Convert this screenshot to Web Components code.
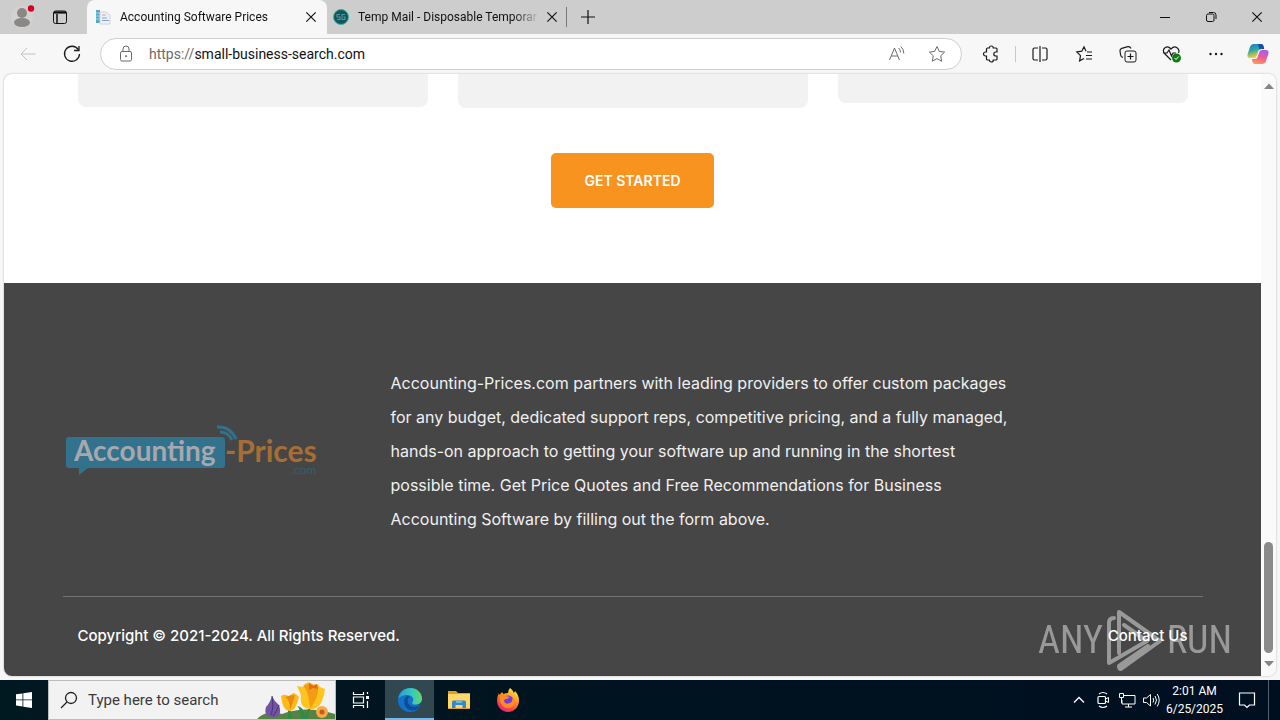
<!DOCTYPE html>
<html lang="en">
<head>
<meta charset="utf-8">
<title>Accounting Software Prices</title>
<style>
    html, body{
        height: 100%;
        margin: 0;
    }
    body{
        display: flex;
        flex-direction: column;
        overflow: hidden;
        background: #f7f7f7;
        font-family: Roboto, "Noto Sans", sans-serif;
        font-size: 12px;
        color: #1b1b1b;
    }
</style>
</head>
<body>
<browser-window>
    <tab-strip slot="tabs">
        <browser-tab icon="page" label="Accounting Software Prices" active></browser-tab>
        <browser-tab icon="mail" label="Temp Mail - Disposable Temporar"></browser-tab>
    </tab-strip>
    <tool-bar slot="toolbar" scheme="https://" address="small-business-search.com"></tool-bar>
    <card-row></card-row>
    <call-to-action>GET STARTED</call-to-action>
    <site-footer>
        <brand-logo slot="logo"></brand-logo>
        <span slot="about">Accounting-Prices.com partners with leading providers to offer custom packages<br>for any budget, dedicated support reps, competitive pricing, and a fully managed,<br>hands-on approach to getting your software up and running in the shortest<br>possible time. Get Price Quotes and Free Recommendations for Business<br>Accounting Software by filling out the form above.</span>
        <span slot="copyright">Copyright © 2021-2024. All Rights Reserved.</span>
    </site-footer>
</browser-window>
<task-bar></task-bar>
<any-run-mark></any-run-mark>

<script>
// small helper: build the template once, clone it for every instance
function define(tag, html, setup){
    const template = document.createElement("template");
    template.innerHTML = html;
    customElements.define(tag, class extends HTMLElement {
        constructor(){
            super();
            this.attachShadow({mode: "open"});
        }
        connectedCallback(){
            if (this.shadowRoot.childNodes.length) return;
            this.shadowRoot.appendChild(template.content.cloneNode(true));
            if (setup) setup(this, this.shadowRoot);
        }
    });
}

// ICONS - [viewBox, markup]
const icons = {
    profile: ["0 0 26 26", `<circle cx="12" cy="13" r="11" fill="#d4d2d1" stroke="none"/><circle cx="12" cy="9" r="5" fill="#8a8886" stroke="none"/><ellipse cx="12" cy="18.500" rx="8" ry="4.500" fill="#8a8886" stroke="none"/><circle cx="21" cy="4.500" r="3.200" fill="#d5001f" stroke="none"/>`],
    workspaces: ["0 0 16 16", `<rect x="1.500" y="2" width="13" height="12.500" rx="2"/><path d="M2 3.500h12" stroke-width="2.200"/><path d="M5 5v9" stroke-width="1.500"/>`],
    page: ["0 0 16 16", `<path d="M1 1h4v13H1z" fill="#55abc7" stroke="none"/><path d="M5 3h6l4 3v9H5z" fill="#edf1f7" stroke="#cdd4df"/><path d="M7 9h5M7 11.500h7" stroke="#8c9ec0"/><path d="M7 6h4" stroke="#e0a0a0"/><path d="M1 4h4M1 7h4M1 10h4" stroke="#a8d3e1"/>`],
    mail: ["0 0 16 16", `<circle cx="8" cy="8" r="7.500" fill="#155563" stroke="#32b39b"/><path d="M7 5.500H4v2.500h3v2.500H4M12 5.500H9v5h3V8h-1.500" stroke="#4f9a91" stroke-width="1.100"/>`],
    close: ["0 0 12 12", `<path d="M2 2l8 8M10 2l-8 8"/>`],
    plus: ["0 0 16 16", `<path d="M8 1v14M1 8h14" stroke-width="1.200"/>`],
    minimize: ["0 0 12 12", `<path d="M1 6.500h10"/>`],
    restore: ["0 0 12 12", `<rect x="1.500" y="3" width="7.500" height="7.500" rx="1.500"/><path d="M4 1.500h4.500q2.500 0 2.500 2.500v4"/>`],
    back: ["0 0 18 18", `<path d="M16.500 9H2M8 3L2 9l6 6"/>`],
    reload: ["0 0 18 18", `<path d="M15.200 4.500A7.500 7.500 0 1 0 16.500 9M16 1v4.500h-5" stroke-width="1.300"/>`],
    lock: ["0 0 16 18", `<rect x="2.500" y="6.500" width="11" height="9.500" rx="1.500"/><path d="M5 6.500V4a3 3 0 0 1 6 0v2.500"/><circle cx="8" cy="11.200" r=".6" fill="currentColor"/>`],
    read: ["0 0 18 18", `<path d="M1.500 15L6.500 3l5 12M3.200 11h6.600M10.500 3q2 1.500 2 4.500M12.800 1.500q3 2.500 3 7"/>`],
    star: ["0 0 18 18", `<path d="M9 1.500l2.300 4.900 5.300.7-3.900 3.700 1 5.400L9 13.600l-4.700 2.600 1-5.400L1.400 7.100l5.300-.7z"/>`],
    puzzle: ["0 0 18 18", `<path d="M5.500 3h1.800a2 2 0 0 1 4 0H14q1 0 1 1v3h-1.200a2 2 0 0 0 0 4H15v3q0 1-1 1h-2.700a2 2 0 0 1-4 0H5.500q-1 0-1-1v-3h-1a2 2 0 0 1 0-4h1V4q0-1 1-1z" stroke-width="1.200"/>`],
    split: ["0 0 18 18", `<path d="M7 3H3.500Q2 3 2 4.500v9Q2 15 3.500 15H7M11 3h3.500Q16 3 16 4.500v9q0 1.500-1.500 1.500H11M9 1v16" stroke-width="1.200"/>`],
    favorites: ["0 0 18 18", `<path d="M11 6.200L9 1.800 6.800 6.200l-5 .7 3.700 3.700-.9 5.200L9 13.500M12 7h5M11 10.500h6M11 14h6" stroke-width="1.200"/>`],
    collections: ["0 0 18 18", `<rect x="6" y="6" width="11" height="11" rx="2"/><path d="M11.500 8.500v6M8.500 11.500h6M4 12.500Q2 12 1.600 10L1 6Q.8 4 2.800 3.400l6-1.700Q11 1.200 12 3.500" stroke-width="1.200"/>`],
    essentials: ["0 0 20 18", `<path d="M9 15L2.500 8.500Q0 5 3 2.700 6 .8 9 4q3-3.200 6-1.300Q18 5 16.500 8M1 8h4l2-3 2.500 6 1.500-3h3" stroke-width="1.200"/><circle cx="14.500" cy="13" r="4.500" fill="#107c10" stroke="none"/><path d="M12.500 13l1.500 1.500 2.700-3" stroke="#fff"/>`],
    more: ["0 0 18 18", `<g fill="currentColor" stroke="none"><circle cx="3.500" cy="9" r="1.200"/><circle cx="9" cy="9" r="1.200"/><circle cx="14.500" cy="9" r="1.200"/></g>`],
    copilot: ["0 0 22 20", `<defs><linearGradient id="a" x2=".3" y2="1"><stop stop-color="#1776d2"/><stop offset=".5" stop-color="#33a89f"/><stop offset="1" stop-color="#ffd02e"/></linearGradient><linearGradient id="b" x1=".6" x2=".3" y2="1"><stop stop-color="#a85be8"/><stop offset=".5" stop-color="#ee5c9a"/><stop offset="1" stop-color="#ff9b50"/></linearGradient></defs><g stroke="none"><path d="M7 0h7q2 0 2.500 2l.7 3H14q-2 0-2.600 2L9.700 12Q9 14 7 14H3q-3 0-2.500-3.500L3 3Q4 0 7 0z" fill="url(#a)"/><path d="M15 20H8q-2 0-2.500-2l-.7-3H8q2 0 2.600-2l1.700-5Q13 6 15 6h4q3 0 2.500 3.500L19 17q-1 3-4 3z" fill="url(#b)"/><path d="M11 0h3q2 0 2.500 2l.7 3H14q-1 0-1.700.5z" fill="#164eaf"/></g>`],
    up: ["0 0 10 6", `<path d="M0 6L5 .5 10 6z" fill="#858585" stroke="none"/>`],
    down: ["0 0 10 6", `<path d="M0 0l5 5.500L10 0z" fill="#858585" stroke="none"/>`],
    windows: ["0 0 16 16", `<path d="M0 2.300l6.500-.9v6.100H0zM7.300 1.300L16 0v7.500H7.300zM0 8.300h6.500v6.200L0 13.600zM7.300 8.300H16V16l-8.700-1.300z" fill="#fff" stroke="none"/>`],
    search: ["0 0 18 18", `<circle cx="11" cy="7" r="5.500" stroke-width="1.300"/><path d="M7 11l-6 6" stroke-width="1.300"/>`],
    tasks: ["0 0 18 18", `<path d="M1.500 1v2.500h10V1M1.500 17v-2.500h10V17M1.500 6h10v6h-10zM15.500 1v2M15.500 10v7" stroke-width="1.200"/><path d="M14 5h3v3h-3z" fill="currentColor" stroke="none"/>`],
    edge: ["0 0 24 24", `<defs><linearGradient id="e" x1="0" x2="1"><stop stop-color="#229fda"/><stop offset=".6" stop-color="#39c9b7"/><stop offset="1" stop-color="#66d66b"/></linearGradient></defs><g stroke="none"><circle cx="12" cy="12" r="12" fill="#1272ca"/><path d="M.3 10.500C1.500 4 6.500 0 12.500 0 19 0 24 5 24 10.500c0 4-3 6-6.500 6-3 0-4-1.300-3-2.600 2.300-3-.5-7-5-7-4.500 0-8 2-9.200 3.600z" fill="url(#e)"/><path d="M9.500 8C4 10.500 5.500 19 11.500 22c5 1.500 9-1 10.800-4.200-6 2.400-12.300.2-12.600-4.300Q9.500 10 12 8.500z" fill="#104c95"/><path d="M24 13v7l-3-1.500 1.300-1.700q-3 1.200-6.500.5 6 .3 8.200-4.300z" fill="#324850"/></g>`],
    folder: ["0 0 22 18", `<g stroke="none"><path d="M0 0h8l2 2h12v16H0z" fill="#dda02b"/><path d="M0 3h22v14H0z" fill="#ffd766"/><path d="M4 17v-6q0-1.500 1.500-1.500h11Q18 9.500 18 11v6h-3.500v-3h-7v3z" fill="#328acb"/><path d="M8 10h6v2H8z" fill="#68b7e5"/></g>`],
    firefox: ["0 0 24 24", `<defs><linearGradient id="f" x1=".8" x2=".3" y2="1"><stop stop-color="#fff044"/><stop offset=".4" stop-color="#ff9a20"/><stop offset=".8" stop-color="#fc3c4c"/><stop offset="1" stop-color="#d62b8c"/></linearGradient></defs><g stroke="none"><path d="M14 0q3 2 4 5l1-2q4 4 4 9.500C23 19 18 24 12 24S1 19 1 12.500Q1 8 3 5l.5 2L6 4l1.500 2Q10 5 12 5q0-3 2-5z" fill="url(#f)"/><circle cx="12" cy="13" r="5.500" fill="#713be0"/><path d="M4 8q4-2 6 0l4 1-3 2q-3 0-3 2 1 4 6 2 3-1 2-5 4 4 1 8-4 4-9 1-4-3-4-7z" fill="#ff8c24"/></g>`],
    chevron: ["0 0 12 12", `<path d="M1 8.500l5-5 5 5" stroke-width="1.300"/>`],
    camera: ["0 0 16 18", `<path d="M4 3q4-3 8 0M4 15q4 3 8 0" stroke-width="1.200"/><rect x="3" y="5.500" width="7.500" height="7" rx="1" stroke-width="1.200"/><path d="M10.500 8l3-1.500v5l-3-1.500"/>`],
    network: ["0 0 18 16", `<path d="M6 3.500h11v8.500H4V8M10.500 12v3M7 15h7M1.500 1.500h4v4h-4zM3.500 6v5"/>`],
    volume: ["0 0 18 16", `<path d="M1.500 6v4.500h3l4 3.500V2.500L4.500 6zM11 6q1.500 2 0 4.500M13 4q3 4 0 8.500M15.200 2q4 6 0 12.500"/>`],
    notice: ["0 0 18 18", `<path d="M1.500 2h15v12h-5L9 16.500 6.500 14h-5z" stroke-width="1.200"/>`],
    flowers: ["0 0 78 38", `<g stroke="none"><path d="M0 38q10-10 25-5Q48 24 78 33v5z" fill="#568345"/><path d="M31 38V26h2l2 12zM44 38q-1-12-4-13 7 1 8 10 3-10 9-11-6 4-6 14z" fill="#328a48"/><path d="M15 15q2 5 7 9 4 12-6 12T9 26q4-4 6-11z" fill="#7353a3"/><path d="M15 15q2 11-1 19M22 24q-3 8-6 11" fill="none" stroke="#493576"/><path d="M24 15q5-3 8 1 3-4 5-4l3 2 2 2q-3 14-9 14t-8-9z" fill="#ffb918"/><path d="M28 16q5 2 5 13 4-10 5-15-5 0-10 2z" fill="#e88913"/><path d="M40 5l6 1q1-4 6-5l4 3q5-3 7 2l5 2q-3 21-14 20-12 0-10-14z" fill="#ffc51c"/><path d="M46 5q5 3 7 22Q62 17 61 6l-8-4z" fill="#f29c16"/><path d="M52 2l4 3 4-2 1 5-5-1-4 2z" fill="#e36b17"/><circle cx="65" cy="31" r="6" fill="#f5aa44"/><circle cx="65" cy="31" r="2.500" fill="#c65b20"/></g>`]
};

define("ui-icon", `
<style>
    :host{
        display: block;
        flex: none;
        width: var(--w, 18px);
        height: var(--h, 18px);
    }
    svg{
        display: block;
        width: 100%;
        height: 100%;
    }
</style>
<svg aria-hidden="true" fill="none" stroke="currentColor"></svg>
`, (host, root) => {
    const svg = root.querySelector("svg");
    const icon = icons[host.getAttribute("name")];
    svg.setAttribute("viewBox", icon[0]);
    svg.innerHTML = icon[1];
});

// BROWSER
define("browser-window", `
<style>
    :host{
        display: flex;
        flex-direction: column;
        flex: 1;
        min-height: 0;
    }
    .view{
        display: flex;
        flex: 1;
        min-height: 0;
        margin: 0 4px 4px;
        overflow: hidden;
        border-radius: 8px;
        background: #fff;
        box-shadow: 0 0 2px rgba(0,0,0,.3);
    }
    main{
        display: flex;
        flex-direction: column;
        flex: 1;
    }
</style>
<slot name="tabs"></slot>
<slot name="toolbar"></slot>
<div class="view">
    <main><slot></slot></main>
    <scroll-bar></scroll-bar>
</div>
`);

define("tab-strip", `
<style>
    :host{
        display: flex;
        height: 34px;
        background: #cdcdcd;
    }
    button{
        display: flex;
        align-items: center;
        justify-content: center;
        border: 0;
        padding: 0;
        background: none;
        color: #111;
    }
    .profile{ width: 46px; }
    .spaces{ width: 28px; margin-right: 13px; }
    .new{ width: 42px; }
    .window{ width: 46px; }
    .gap{ flex: 1; }
</style>
<button class="profile" aria-label="Profile"><ui-icon name="profile" style="--w:26px;--h:26px"></ui-icon></button>
<button class="spaces" aria-label="Workspaces"><ui-icon name="workspaces" style="--w:16px;--h:16px"></ui-icon></button>
<slot></slot>
<button class="new" aria-label="New tab"><ui-icon name="plus" style="--w:16px;--h:16px"></ui-icon></button>
<div class="gap"></div>
<button class="window" aria-label="Minimize"><ui-icon name="minimize" style="--w:12px;--h:12px"></ui-icon></button>
<button class="window" aria-label="Restore"><ui-icon name="restore" style="--w:12px;--h:12px"></ui-icon></button>
<button class="window" aria-label="Close"><ui-icon name="close" style="--w:14px;--h:14px"></ui-icon></button>
`);

define("browser-tab", `
<style>
    :host{
        display: flex;
        align-items: center;
        box-sizing: border-box;
        width: 240px;
        padding: 0 9px 0 8px;
    }
    :host([active]){
        border-radius: 8px 8px 0 0;
        background: #f7f7f7;
    }
    :host(:not([active])){
        padding-left: 6px;
        background: linear-gradient(#777, #777) right center / 1px 20px no-repeat;
    }
    button{
        border: 0;
        padding: 0;
        background: none;
        font: inherit;
        color: #111;
    }
    .title{
        flex: 1;
        margin: 0 8px 0 9px;
        white-space: nowrap;
        text-align: left;
        -webkit-mask-image: linear-gradient(90deg, #000 155px, transparent 182px);
    }
</style>
<button class="title"></button>
<button aria-label="Close tab"><ui-icon name="close" style="--w:14px;--h:14px"></ui-icon></button>
`, (host, root) => {
    const title = root.querySelector(".title");
    title.textContent = host.getAttribute("label");
    const icon = document.createElement("ui-icon");
    icon.setAttribute("name", host.getAttribute("icon"));
    icon.style.cssText = "--w:16px;--h:16px";
    title.before(icon);
});

define("tool-bar", `
<style>
    :host{
        display: flex;
        align-items: center;
        height: 40px;
        padding-right: 2px;
        background: #f7f7f7;
    }
    button{
        display: flex;
        align-items: center;
        justify-content: center;
        border: 0;
        padding: 0;
        background: none;
        color: #1b1b1b;
    }
    .nav{ width: 44px; }
    .back{ margin-left: 6px; color: #c2c2c2; }
    form{
        display: flex;
        align-items: center;
        flex: 1;
        box-sizing: border-box;
        height: 32px;
        margin-left: 6px;
        padding: 0 15px 0 17px;
        border: 1px solid #cfcfcf;
        border-radius: 16px;
        background: #fff;
        font-size: 14px;
        color: #6b6b6b;
    }
    form button{ color: #6b6b6b; }
    label{ margin-left: 15px; }
    input{
        flex: 1;
        min-width: 0;
        border: 0;
        padding: 0;
        outline: 0;
        background: none;
        font: inherit;
        color: #111;
    }
    .read{ margin-right: 22px; }
    .tools{
        display: flex;
        align-items: center;
        margin-left: 7px;
    }
    .tools button{ width: 44px; }
    .tools .last{ width: 40px; }
    hr{
        width: 1px;
        height: 16px;
        margin: 0 2px;
        border: 0;
        background: #c8c8c8;
    }
</style>
<button class="nav back" aria-label="Back"><ui-icon name="back"></ui-icon></button>
<button class="nav" aria-label="Reload"><ui-icon name="reload"></ui-icon></button>
<form>
    <button type="button" aria-label="Site information"><ui-icon name="lock" style="--w:16px"></ui-icon></button>
    <label for="address"></label><input id="address" spellcheck="false">
    <button type="button" class="read" aria-label="Read aloud"><ui-icon name="read"></ui-icon></button>
    <button type="button" aria-label="Add to favorites"><ui-icon name="star"></ui-icon></button>
</form>
<div class="tools">
    <button aria-label="Extensions"><ui-icon name="puzzle"></ui-icon></button>
    <hr>
    <button aria-label="Split screen"><ui-icon name="split"></ui-icon></button>
    <button aria-label="Favorites"><ui-icon name="favorites"></ui-icon></button>
    <button aria-label="Collections"><ui-icon name="collections"></ui-icon></button>
    <button aria-label="Browser essentials"><ui-icon name="essentials" style="--w:20px"></ui-icon></button>
    <button aria-label="Settings and more"><ui-icon name="more"></ui-icon></button>
    <button class="last" aria-label="Copilot"><ui-icon name="copilot" style="--w:22px;--h:20px"></ui-icon></button>
</div>
`, (host, root) => {
    root.querySelector("label").textContent = host.getAttribute("scheme");
    root.querySelector("input").value = host.getAttribute("address");
});

define("scroll-bar", `
<style>
    :host{
        display: flex;
        flex-direction: column;
        align-items: center;
        width: 15px;
        padding: 9px 0;
        box-sizing: border-box;
        background: #fafafa;
    }
    .track{
        display: flex;
        flex: 1;
        align-items: flex-end;
        padding: 8px 0;
    }
    .thumb{
        width: 9px;
        height: 20%;
        border-radius: 5px;
        background: #8b8b8b;
    }
</style>
<ui-icon name="up" style="--w:10px;--h:6px"></ui-icon>
<div class="track"><div class="thumb"></div></div>
<ui-icon name="down" style="--w:10px;--h:6px"></ui-icon>
`);

// PAGE
define("card-row", `
<style>
    :host{
        display: flex;
        align-items: flex-start;
        gap: 30px;
        width: 1110px;
        max-width: 92%;
        height: 34px;
        margin: 0 auto;
    }
    div{
        flex: 1;
        height: 33px;
        border-radius: 0 0 8px 8px;
        background: #f2f2f2;
    }
    .tall{ height: 34px; }
    .short{ height: 29px; }
</style>
<div></div><div class="tall"></div><div class="short"></div>
`);

define("call-to-action", `
<style>
    :host{
        display: flex;
        justify-content: center;
        padding: 45px 0 75px;
    }
    button{
        height: 55px;
        padding: 0 33px;
        border: 0;
        border-radius: 5px;
        background: #f7931e;
        font: 600 14px Inter, sans-serif;
        color: #fff;
    }
</style>
<button><slot></slot></button>
`);

define("site-footer", `
<style>
    :host{
        display: flex;
        flex-direction: column;
        flex: 1;
        align-items: center;
        background: #464646;
        font: 500 15px/34px Inter, sans-serif;
        color: #f0f0f0;
    }
    .inner{
        width: 1140px;
        max-width: 94%;
    }
    .top{
        display: flex;
        align-items: center;
        padding: 83px 0 60px;
        border-bottom: 1px solid #747474;
    }
    .logo{
        flex: 0 0 328px;
    }
    p{
        margin: 0;
        font-size: 16px;
        font-weight: 400;
        white-space: nowrap;
    }
    .bottom{
        display: flex;
        justify-content: space-between;
        padding: 22px 15px;
        color: #fff;
    }
    a{
        color: inherit;
        text-decoration: none;
    }
</style>
<footer class="inner">
    <div class="top">
        <div class="logo"><slot name="logo"></slot></div>
        <p><slot name="about"></slot></p>
    </div>
    <div class="bottom">
        <slot name="copyright"></slot>
        <a href="#contact">Contact Us</a>
    </div>
</footer>
`);

define("brand-logo", `
<style>
    :host{
        display: block;
        width: 258px;
        height: 54px;
    }
    svg{
        display: block;
        overflow: visible;
    }
    text{
        font-family: Lato, sans-serif;
        font-weight: 700;
        font-size: 28px;
    }
    .prices{ font-size: 30px; }
    .com{
        font-size: 12px;
        font-weight: 400;
    }
</style>
<svg width="258" height="54" viewBox="0 0 258 54" role="img" aria-label="Accounting-Prices.com">
    <path d="M6 13h153q3 0 3 3v25q0 3-3 3H25l-9 7V44H6q-3 0-3-3V16q0-3 3-3z" fill="#32728d"/>
    <path d="M154 3q13-1 19 12M157 8q8 0 12 8" fill="none" stroke="#32728d" stroke-width="3"/>
    <text x="11" y="37" fill="#a7a7ae">Accounting</text>
    <text class="prices" x="162" y="38" fill="#a66d35">-Prices</text>
    <text class="com" x="228" y="50" fill="#365e6f">.com</text>
</svg>
`);

// TASKBAR
define("task-bar", `
<style>
    :host{
        display: flex;
        height: 40px;
        background: linear-gradient(90deg, #001820, #000f20);
        color: #fff;
    }
    button{
        display: flex;
        align-items: center;
        justify-content: center;
        width: 49px;
        border: 0;
        padding: 0;
        background: none;
        font: inherit;
        color: inherit;
    }
    .find{
        display: flex;
        align-items: center;
        box-sizing: border-box;
        width: 288px;
        padding-left: 11px;
        border: 1px solid #bcbcbc;
        background: #f2f2f2;
        color: #222;
    }
    label{ margin-right: 10px; }
    input{
        flex: 1;
        min-width: 0;
        border: 0;
        padding: 0;
        outline: 0;
        background: none;
        font: inherit;
        font-size: 15px;
    }
    input::placeholder{
        color: #3a3a3a;
        opacity: 1;
    }
    .start{ width: 48px; }
    .open{
        background: #324850;
        box-shadow: inset 0 -2px #76b9ed;
    }
    .tray{
        display: flex;
        margin-left: auto;
    }
    .tray button{ width: 24px; }
    .tray .clock{
        width: 63px;
        line-height: 18px;
        text-align: center;
    }
    .tray .notice{ width: 42px; }
    .peek{
        width: 11px;
        border-left: 1px solid #53606b;
    }
</style>
<button class="start" aria-label="Start"><ui-icon name="windows" style="--w:16px;--h:16px"></ui-icon></button>
<div class="find">
    <label for="find" aria-label="Search"><ui-icon name="search"></ui-icon></label>
    <input id="find" placeholder="Type here to search">
    <ui-icon name="flowers" style="--w:78px;--h:38px"></ui-icon>
</div>
<button aria-label="Task view"><ui-icon name="tasks"></ui-icon></button>
<button class="open" aria-label="Edge"><ui-icon name="edge" style="--w:24px;--h:24px"></ui-icon></button>
<button aria-label="File Explorer"><ui-icon name="folder" style="--w:22px"></ui-icon></button>
<button aria-label="Firefox"><ui-icon name="firefox" style="--w:24px;--h:24px"></ui-icon></button>
<div class="tray">
    <button aria-label="Show hidden icons"><ui-icon name="chevron" style="--w:12px;--h:12px"></ui-icon></button>
    <button aria-label="Meet now"><ui-icon name="camera" style="--w:16px"></ui-icon></button>
    <button aria-label="Network"><ui-icon name="network" style="--h:16px"></ui-icon></button>
    <button aria-label="Volume"><ui-icon name="volume" style="--h:16px"></ui-icon></button>
    <button class="clock"><span>2:01 AM<br>6/25/2025</span></button>
    <button class="notice" aria-label="Notifications"><ui-icon name="notice"></ui-icon></button>
    <div class="peek"></div>
</div>
`);

// WATERMARK - lies over the page
define("any-run-mark", `
<style>
    :host{
        position: absolute;
        right: 48px;
        bottom: 48px;
        display: flex;
        align-items: center;
        gap: 4px;
        font: 38px/64px "Liberation Sans Narrow", "Roboto Condensed", Roboto, sans-serif;
        color: #fff;
        opacity: .45;
        pointer-events: none;
    }
    svg{
        display: block;
    }
</style>
<span>ANY</span>
<svg width="56" height="64" viewBox="0 0 56 64" fill="none" stroke="#fff" stroke-width="4" stroke-linejoin="round" stroke-linecap="round" aria-hidden="true">
    <path d="M12 45V4l41 29-39 28q-2 0-2-3l29-20M7 10Q2 10 2 15v40l38-22-23-16"/>
</svg>
<span>RUN</span>
`);
</script>
</body>
</html>
